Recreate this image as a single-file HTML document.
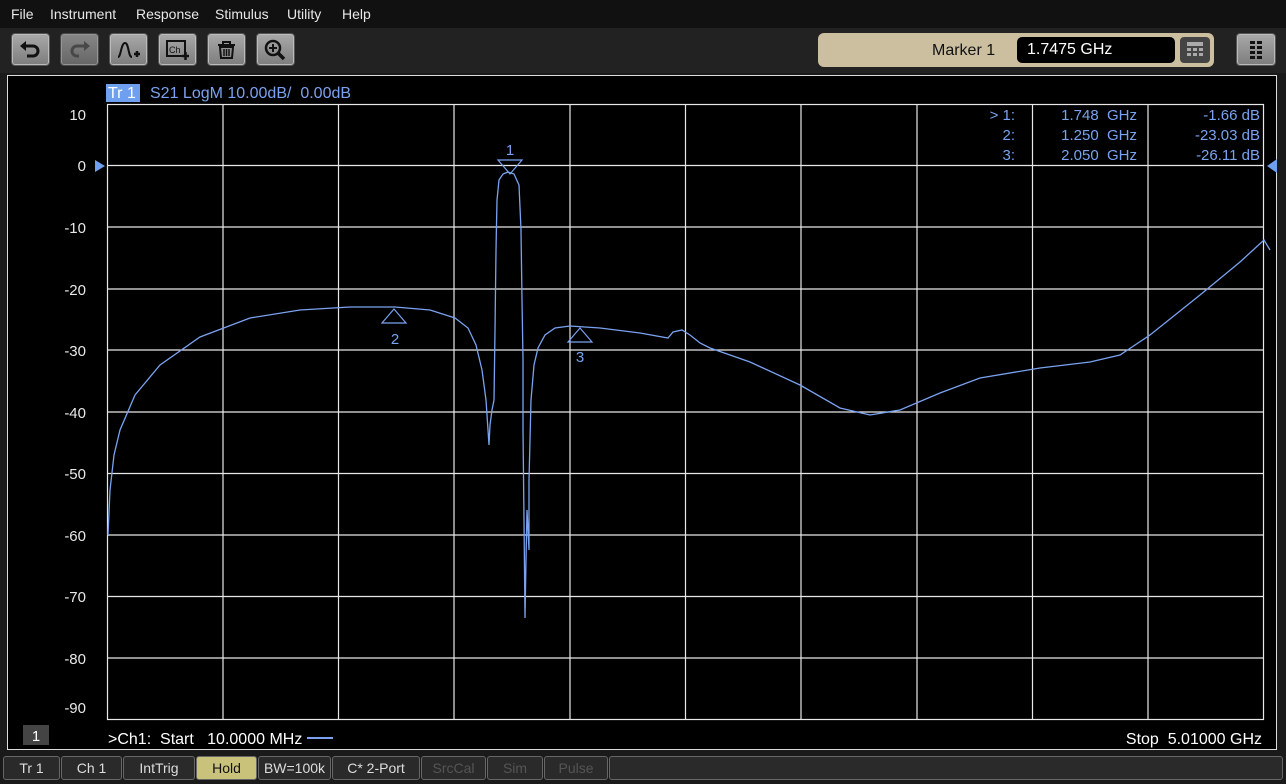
<!DOCTYPE html>
<html><head><style>
body{margin:0;width:1286px;height:784px;background:#1a1a1a;font-family:"Liberation Sans",sans-serif;overflow:hidden;position:relative}
svg text{white-space:pre}
.menu{position:absolute;left:0;top:0;width:1286px;height:28px;background:#111;color:#e8e8e8;font-size:14px}
.menu span{position:absolute;top:6px}
.tb{position:absolute;top:33px;width:37px;height:31px;background:linear-gradient(#a9a9a9,#7d7d7d);border:1px solid #555;border-radius:4px;box-shadow:inset 0 0 0 1px #bbb}
.mk{position:absolute;left:818px;top:33px;width:396px;height:34px;background:#cbbf9f;border-radius:6px}
.bb{position:absolute;top:756px;height:22px;border:1px solid #666;border-radius:3px;background:#2a2a2a;color:#ddd;font-size:14px;text-align:center;line-height:22px}
</style></head><body>
<div class="menu"><span style="left:11px">File</span><span style="left:50px">Instrument</span><span style="left:136px">Response</span><span style="left:215px">Stimulus</span><span style="left:287px">Utility</span><span style="left:342px">Help</span></div>
<div style="position:absolute;left:0;top:28px;width:1286px;height:45px;background:#222"></div>
<div class="tb" style="left:11px"><svg width="37" height="31"><path d="M12 12h9a5 5 0 0 1 0 10h-6" stroke="#111" stroke-width="3" fill="none"/><path d="M8 12l6-5v10z" fill="#111"/></svg></div>
<div class="tb" style="left:60px;opacity:.75"><svg width="37" height="31"><path d="M25 12h-9a5 5 0 0 0 0 10h2" stroke="#555" stroke-width="3" fill="none"/><path d="M29 12l-6-5v10z" fill="#555"/></svg></div>
<div class="tb" style="left:109px"><svg width="37" height="31"><path d="M8 23c3 0 3-14 7-14s3 14 7 14" stroke="#111" stroke-width="2" fill="none"/><path d="M24 20h6M27 17v6" stroke="#111" stroke-width="2.5"/></svg></div>
<div class="tb" style="left:158px"><svg width="37" height="31"><rect x="8" y="7" width="18" height="15" fill="none" stroke="#111" stroke-width="2"/><text x="10" y="19" font-size="9" font-family="Liberation Sans" fill="#111">Ch</text><path d="M23 22h7M26.5 18v8" stroke="#111" stroke-width="2.5"/></svg></div>
<div class="tb" style="left:207px"><svg width="37" height="31"><path d="M10 11h17M15 11v-3h7v3M12 13h13l-1 11h-11z" stroke="#111" stroke-width="2" fill="none"/><path d="M16 15v7M18.5 15v7M21 15v7" stroke="#111" stroke-width="1.5"/></svg></div>
<div class="tb" style="left:256px"><svg width="37" height="31"><circle cx="16" cy="14" r="7" fill="none" stroke="#111" stroke-width="2.5"/><path d="M21 19l6 6" stroke="#111" stroke-width="3.5"/><path d="M12 14h8M16 10v8" stroke="#111" stroke-width="2"/></svg></div>
<div class="mk"><span style="position:absolute;left:114px;top:9px;font-size:16px;color:#111">Marker 1</span>
<div style="position:absolute;left:199px;top:4px;width:158px;height:26px;background:#000;border-radius:5px;color:#fff;font-size:16px;line-height:26px;padding-left:10px;box-sizing:border-box">1.7475 GHz</div>
<div style="position:absolute;left:362px;top:4px;width:30px;height:26px;background:#444;border-radius:4px"><svg width="30" height="26"><rect x="7" y="5" width="16" height="4" fill="#aaa"/><g fill="#aaa"><rect x="7" y="11" width="4" height="3"/><rect x="13" y="11" width="4" height="3"/><rect x="19" y="11" width="4" height="3"/><rect x="7" y="16" width="4" height="3"/><rect x="13" y="16" width="4" height="3"/><rect x="19" y="16" width="4" height="3"/></g></svg></div></div>
<div class="tb" style="left:1236px;width:38px"><svg width="38" height="31"><g fill="#111"><rect x="13" y="7" width="5" height="3"/><rect x="20" y="7" width="5" height="3"/><rect x="13" y="12" width="5" height="3"/><rect x="20" y="12" width="5" height="3"/><rect x="13" y="17" width="5" height="3"/><rect x="20" y="17" width="5" height="3"/><rect x="13" y="22" width="5" height="3"/><rect x="20" y="22" width="5" height="3"/></g></svg></div>
<div style="position:absolute;left:7px;top:75px;width:1270px;height:675px;background:#000;border:1px solid #ddd;box-sizing:border-box"></div>
<svg width="1286" height="784" style="position:absolute;left:0;top:0" font-family="Liberation Sans">
<rect x="106" y="84" width="34" height="18" fill="#6fa0f0"/>
<text x="108" y="98" fill="#fff" font-size="16">Tr 1</text>
<text x="150" y="98" fill="#7aa2f0" font-size="16">S21 LogM 10.00dB/  0.00dB</text>
<g stroke="#e8e8e8" stroke-width="1.2" fill="none">
<rect x="107.5" y="104.5" width="1156" height="615"/>
<path d="M223 104v615M338.5 104v615M454 104v615M570 104v615M685.5 104v615M801 104v615M917 104v615M1032.5 104v615M1148 104v615"/>
<path d="M107 165.5h1157M107 227h1157M107 289h1157M107 350h1157M107 412h1157M107 473.5h1157M107 535h1157M107 596.5h1157M107 658h1157"/>
</g>
<g fill="#e8e8e8" font-size="15" text-anchor="end">
<text x="86" y="120">10</text><text x="86" y="171">0</text><text x="86" y="233">-10</text><text x="86" y="295">-20</text><text x="86" y="356">-30</text><text x="86" y="418">-40</text><text x="86" y="479">-50</text><text x="86" y="541">-60</text><text x="86" y="602">-70</text><text x="86" y="664">-80</text><text x="86" y="713">-90</text></g>
<path d="M95 160l10 6-10 6z" fill="#6fa0f0"/><path d="M1277 159l-10 7 10 7z" fill="#6fa0f0"/>
<g fill="#7aa2f0" font-size="15" text-anchor="end">
<text x="1015" y="120">&gt; 1:</text><text x="1015" y="140">2:</text><text x="1015" y="160">3:</text>
<text x="1137" y="120">1.748  GHz</text><text x="1137" y="140">1.250  GHz</text><text x="1137" y="160">2.050  GHz</text>
<text x="1260" y="120">-1.66 dB</text><text x="1260" y="140">-23.03 dB</text><text x="1260" y="160">-26.11 dB</text></g>
<polyline fill="none" stroke="#7aa2f0" stroke-width="1.3" points="108,535 110,490 114,455 120,430 135,395 160,365 200,337 250,318 300,310 350,307 395,307 430,310 455,318 468,328 476,345 482,370 486,400 488,430 489,445 490,425 492,410 494,400 495,330 496,250 497,200 499,180 503,174 508,172 514,174 519,185 521,230 522,300 523,360 523,430 524,520 525,618 526,560 527,510 529,550 529,480 531,400 534,365 538,348 545,335 555,328 570,326 600,328 640,333 668,338 673,332 682,330 690,335 700,343 710,348 750,362 800,385 840,408 870,415 900,410 940,393 980,378 1040,368 1090,362 1120,355 1150,335 1200,295 1240,262 1264,240 1270,250"/>
<g fill="none" stroke="#7aa2f0" stroke-width="1.2">
<path d="M498 160h24l-12 14z"/><path d="M382 323h24l-12-14z"/><path d="M568 342h24l-12-14z"/></g>
<g fill="#7aa2f0" font-size="15" text-anchor="middle"><text x="510" y="155">1</text><text x="395" y="344">2</text><text x="580" y="362">3</text></g>
<rect x="23" y="725" width="26" height="20" fill="#444"/><text x="36" y="741" fill="#fff" font-size="15" text-anchor="middle">1</text>
<text x="108" y="744" fill="#fff" font-size="16">&gt;Ch1:  Start   10.0000 MHz</text>
<path d="M307 738h26" stroke="#7aa2f0" stroke-width="2"/>
<text x="1262" y="744" fill="#fff" font-size="16" text-anchor="end">Stop  5.01000 GHz</text>
</svg>
<div class="bb" style="left:3px;width:55px">Tr 1</div>
<div class="bb" style="left:61px;width:59px">Ch 1</div>
<div class="bb" style="left:123px;width:70px">IntTrig</div>
<div class="bb" style="left:196px;width:59px;background:#c9c27a;color:#111">Hold</div>
<div class="bb" style="left:258px;width:71px">BW=100k</div>
<div class="bb" style="left:332px;width:86px">C* 2-Port</div>
<div class="bb" style="left:421px;width:63px;color:#555">SrcCal</div>
<div class="bb" style="left:487px;width:54px;color:#555">Sim</div>
<div class="bb" style="left:544px;width:62px;color:#555">Pulse</div>
<div class="bb" style="left:609px;width:672px"></div>
</body></html>
